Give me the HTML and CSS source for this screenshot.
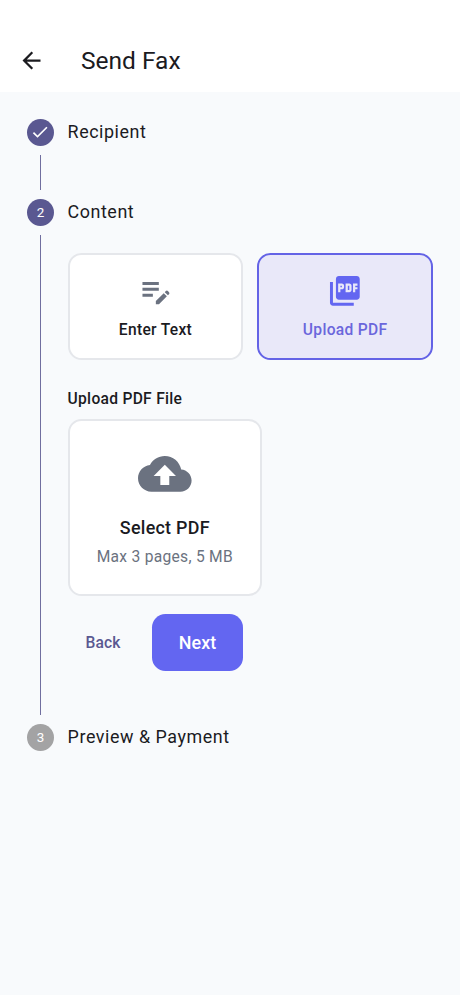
FILE: index.html
```html
<!DOCTYPE html>
<html lang="en">
<head>
  <meta charset="UTF-8" />
  <meta name="viewport" content="width=device-width, initial-scale=1.0"/>
  <title>Send Fax</title>
  <link rel="stylesheet" href="styles.css">
</head>
<body>
  <header class="app-bar">
    <svg class="back-icon" viewBox="0 0 24 24"><path d="M20 11H7.83l5.59-5.59L12 4l-8 8 8 8 1.41-1.41L7.83 13H20v-2z"/></svg>
    <h1>Send Fax</h1>
  </header>

  <main class="stepper">
    <!-- Step 1 -->
    <section class="step step-recipient">
      <div class="rail">
        <span class="circle">
          <svg class="check-icon" viewBox="0 0 24 24"><path d="M9 16.17 4.83 12l-1.42 1.41L9 19 21 7l-1.41-1.41z"/></svg>
        </span>
        <span class="line"></span>
      </div>
      <h2>Recipient</h2>
    </section>

    <!-- Step 2 -->
    <section class="step step-content">
      <div class="rail">
        <span class="circle">2</span>
        <span class="line"></span>
      </div>
      <div class="step-body">
        <h2>Content</h2>
        <div class="options">
          <div class="option">
            <svg viewBox="0 0 24 24"><path d="M3 10h11v2H3v-2zm0-2h11V6H3v2zm0 8h7v-2H3v2zm15.01-3.13.71-.71a.996.996 0 0 1 1.41 0l.71.71c.39.39.39 1.02 0 1.41l-.71.71-2.12-2.12zm-.71.71-5.3 5.3V21h2.12l5.3-5.3-2.12-2.12z"/></svg>
            <span>Enter Text</span>
          </div>
          <div class="option selected">
            <svg viewBox="0 0 24 24"><path d="M20 2H8c-1.1 0-2 .9-2 2v12c0 1.1.9 2 2 2h12c1.1 0 2-.9 2-2V4c0-1.1-.9-2-2-2zm-8.5 7.5c0 .83-.67 1.5-1.5 1.5H9v2H7.5V7H10c.83 0 1.5.67 1.5 1.5v1zm5 2c0 .83-.67 1.5-1.5 1.5h-2.5V7H15c.83 0 1.5.67 1.5 1.5v3zm4-3H19v1h1.5V11H19v2h-1.5V7h3v1.5zM9 9.5h1v-1H9v1zM4 6H2v14c0 1.1.9 2 2 2h14v-2H4V6zm10 5.5h1v-3h-1v3z"/></svg>
            <span>Upload PDF</span>
          </div>
        </div>

        <h3>Upload PDF File</h3>
        <div class="upload">
          <svg viewBox="0 0 24 24"><path d="M19.35 10.04C18.67 6.59 15.64 4 12 4 9.11 4 6.6 5.64 5.35 8.04 2.34 8.36 0 10.91 0 14c0 3.31 2.69 6 6 6h13c2.76 0 5-2.24 5-5 0-2.64-2.05-4.78-4.65-4.96zM14 13v4h-4v-4H7l5-5 5 5h-3z"/></svg>
          <strong>Select PDF</strong>
          <span>Max 3 pages, 5 MB</span>
        </div>

        <div class="actions">
          <button class="btn-back">Back</button>
          <button class="btn-next">Next</button>
        </div>
      </div>
    </section>

    <!-- Step 3 -->
    <section class="step">
      <div class="rail">
        <span class="circle pending">3</span>
      </div>
      <h2>Preview &amp; Payment</h2>
    </section>
  </main>
</body>
</html>
```
FILE: styles.css
```css
* {
  box-sizing: border-box;
}

body {
  margin: 0;
  min-height: 995px;
  background-color: #f8fafc;
  color: #1b1b1f;
  font-family: Roboto, sans-serif;
}

svg {
  display: block;
  fill: currentColor;
}

h1, h2, h3 {
  margin: 0;
  white-space: nowrap;
}

.app-bar {
  display: flex;
  align-items: center;
  gap: 36px;
  height: 92px;
  padding: 29px 18px 0;
  background-color: #ffffff;
}

.back-icon {
  width: 27px;
  height: 27px;
}

h1 {
  font-size: 24.5px;
  font-weight: 400;
  line-height: 32px;
}

.stepper {
  padding: 27px 27px 0;
}

.step {
  display: flex;
  gap: 13.8px;
}

.step-recipient {
  height: 80.4px;
}

.step-content {
  height: 525px;
}

.rail {
  display: flex;
  flex-direction: column;
  align-items: center;
  flex: none;
  width: 26.8px;
}

.circle {
  display: flex;
  align-items: center;
  justify-content: center;
  flex: none;
  width: 26.8px;
  height: 26.8px;
  border-radius: 50%;
  background-color: #5a5891;
  color: #ffffff;
  font-size: 13.4px;
}

.circle.pending {
  background-color: #a3a3a4;
}

.check-icon {
  width: 20px;
  height: 20px;
}

.line {
  flex: 1;
  width: 1.2px;
  margin: 9px 0;
  background-color: #706e9f;
}

h2 {
  font-size: 17.9px;
  font-weight: 400;
  line-height: 26px;
  letter-spacing: 0.55px;
}

.step-body {
  flex: 1;
}

.options {
  display: flex;
  gap: 14px;
  margin-top: 28px;
}

.option {
  flex: 1;
  display: flex;
  flex-direction: column;
  align-items: center;
  height: 107px;
  padding-top: 17.8px;
  border: 2px solid #e5e7eb;
  border-radius: 13.4px;
  background-color: #ffffff;
}

.option svg {
  width: 35.7px;
  height: 35.7px;
  color: #6b7280;
}

.option span {
  margin-top: 10px;
  font-size: 15.6px;
  font-weight: 500;
  line-height: 22px;
  letter-spacing: 0.3px;
}

.option.selected {
  border-color: #6463e6;
  background-color: #e9e8f9;
}

.option.selected svg {
  color: #6366f1;
}

.option.selected span {
  color: #6b66dc;
}

h3 {
  margin-top: 28px;
  font-size: 15.6px;
  font-weight: 500;
  line-height: 22px;
  letter-spacing: 0.28px;
}

.upload {
  display: flex;
  flex-direction: column;
  align-items: center;
  width: 194.5px;
  height: 177px;
  margin-top: 9px;
  padding-top: 26px;
  border: 2px solid #e5e7eb;
  border-radius: 13.4px;
  background-color: #ffffff;
}

.upload svg {
  width: 53.6px;
  height: 53.6px;
  color: #6b7280;
}

.upload strong {
  margin-top: 14px;
  font-size: 17.9px;
  font-weight: 500;
  line-height: 26px;
  letter-spacing: 0.28px;
}

.upload span {
  margin-top: 5px;
  color: #6b7280;
  font-size: 15.6px;
  line-height: 22px;
  letter-spacing: 0.28px;
}

.actions {
  display: flex;
  align-items: center;
  gap: 13.4px;
  margin-top: 18px;
}

.actions button {
  padding: 0;
  border: none;
  font-family: inherit;
  font-weight: 500;
}

.btn-back {
  width: 71px;
  height: 45px;
  background: none;
  color: #5a5891;
  font-size: 15.6px;
  letter-spacing: 0.11px;
}

.btn-next {
  width: 91px;
  height: 57px;
  border-radius: 13.4px;
  background-color: #6366f1;
  color: #ffffff;
  font-size: 17.9px;
  letter-spacing: 0.11px;
}
```
